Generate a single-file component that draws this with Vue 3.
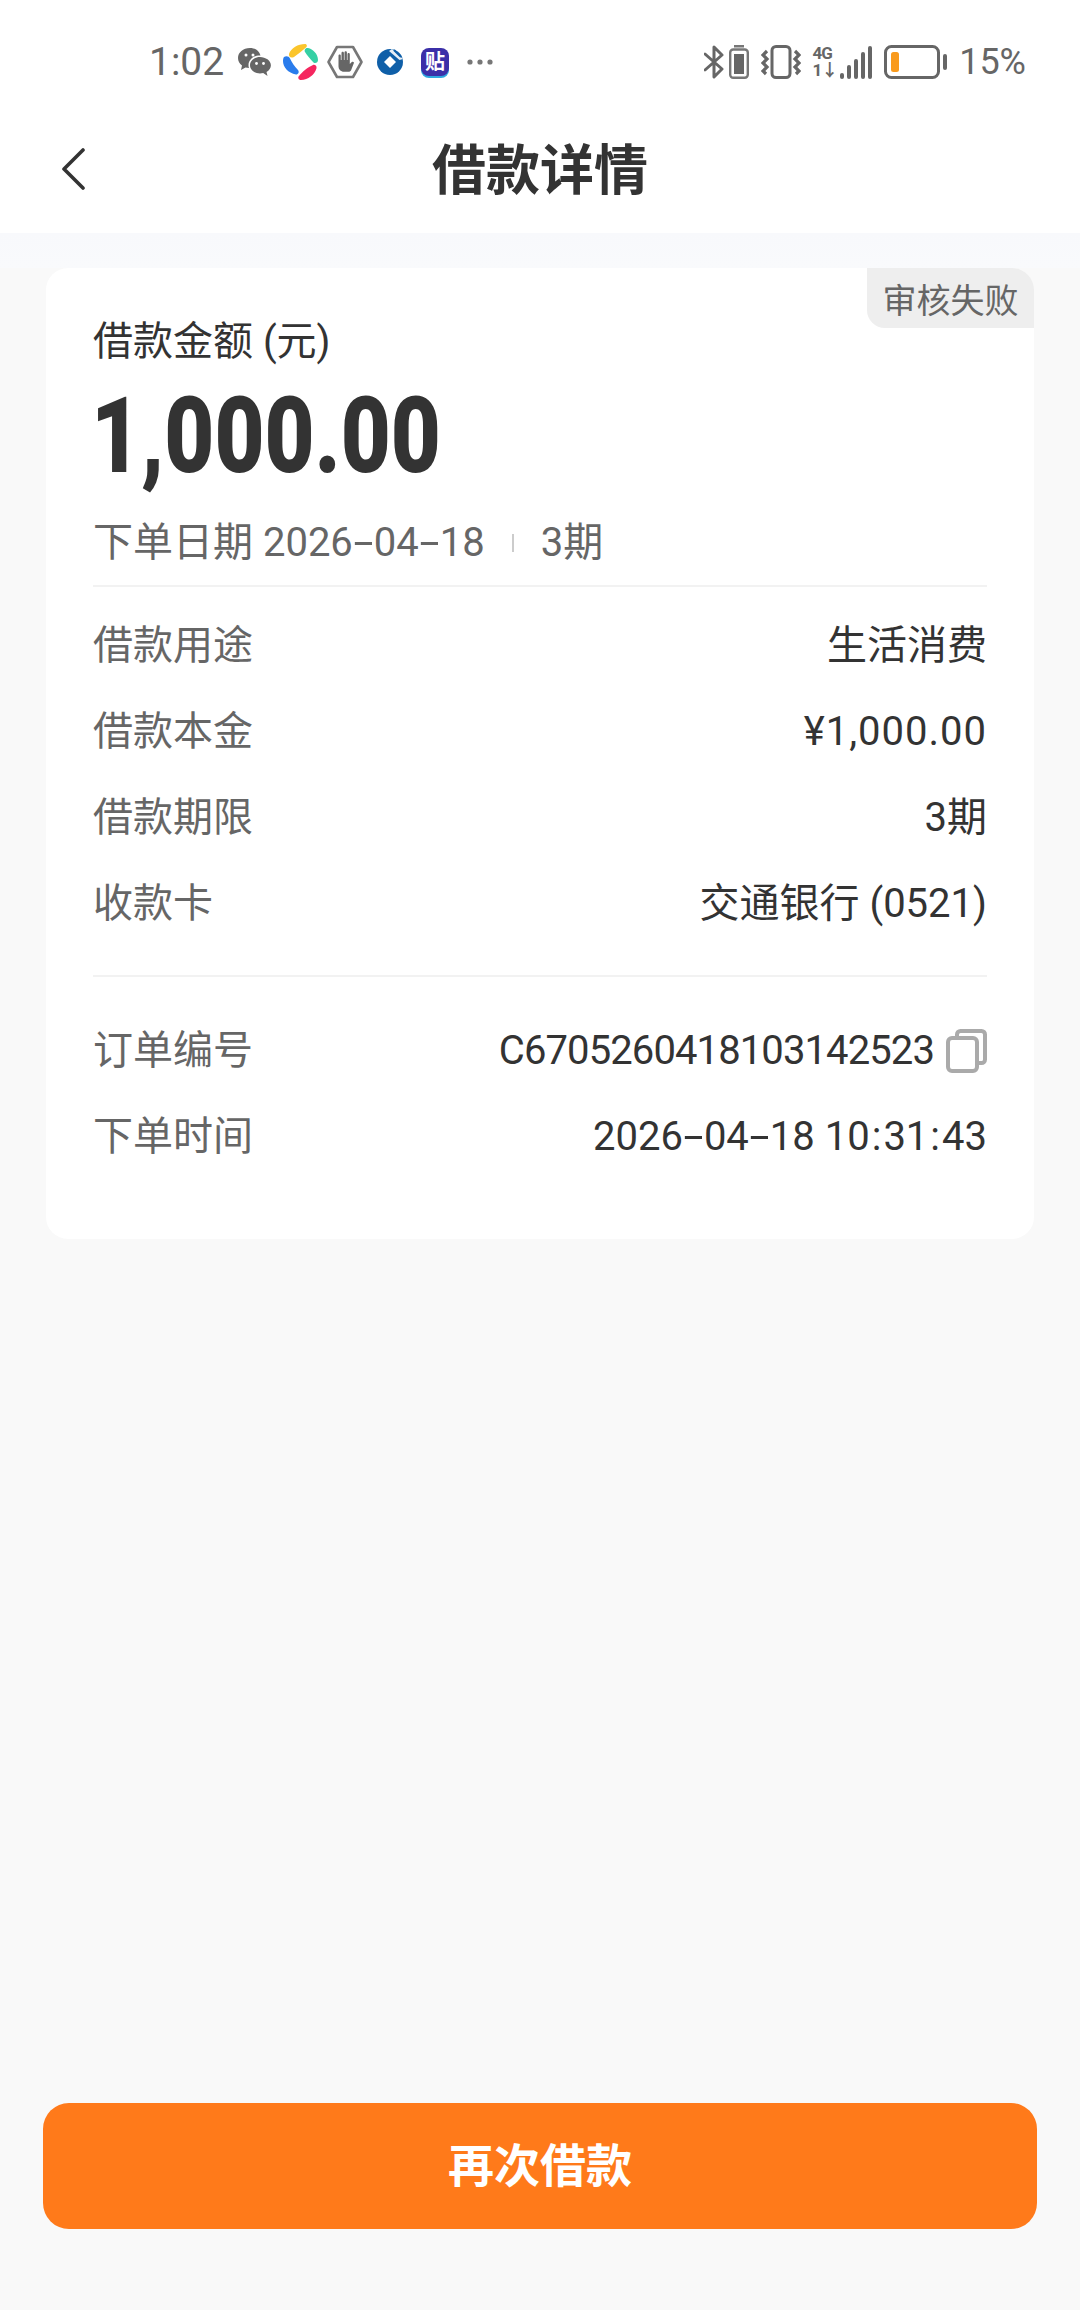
<script setup>
const details = [
  { label: '借款用途', value: '生活消费' },
  { label: '借款本金', value: '¥1,000.00', cls: 'money' },
  { label: '借款期限', value: '3期' },
  { label: '收款卡', value: '交通银行 (0521)' },
]
</script>

<template>
  <div class="page">
    <div class="status-bar">
      <div class="status-left">
        <span class="time">1:02</span>
        <!-- wechat -->
        <svg class="ic-wechat" width="34" height="30" viewBox="0 0 34 30">
          <path d="M13 1C6 1 1 5.500 1 11c0 3 1.500 5.600 4 7.500L4 23l4.500-2.500c1.200.3 2.500.5 3.500.5-.3-1-.5-1.800-.5-2.800 0-5.500 5-9.700 11-9.700h1C22 3.500 18 1 13 1z" fill="#666"/>
          <path d="M23 10c-5.500 0-10 3.600-10 8.200s4.500 8.200 10 8.200c1.100 0 2.200-.2 3.200-.5L30.500 29l-1-4c2.700-1.600 4.400-4 4.400-6.800C33.900 13.600 28.500 10 23 10z" fill="#666"/>
          <circle cx="9" cy="8" r="1.500" fill="#fff"/><circle cx="16" cy="8" r="1.500" fill="#fff"/>
          <circle cx="19.500" cy="16.500" r="1.400" fill="#fff"/><circle cx="26.500" cy="16.500" r="1.400" fill="#fff"/>
        </svg>
        <!-- colourful petals -->
        <svg class="ic-petal" width="35" height="36" viewBox="0 0 35 36">
          <path d="M6 10C8 4 15 0 22 0c2 0 2.500 2.500 1 3.500C19 7 15 10 11 13c-3 1.500-5.500 0-5-3z" fill="#fbc52c"/>
          <path d="M25 4c5 1 10 6 10 12 0 2.500-2.500 4-4.500 2.500C27 15 24 11 22 8c-1.200-2.500 1-4.500 3-4z" fill="#35d0a4"/>
          <path d="M1 13c2-1.500 5-1 6 1.500 2 4 4.500 8 8 11.500 1.500 2 .5 4.500-2 4.500C5 29 0 23 0 17c0-1.500.3-3 1-4z" fill="#2a7cec"/>
          <path d="M30 21c2-.6 4 1 3.500 3.300C31.500 31 25 36 18 36c-2.500 0-3.500-2.500-2-4C19 28 25 23 30 21z" fill="#f5265f"/>
        </svg>
        <!-- stop hand -->
        <svg class="ic-hand" width="36" height="36" viewBox="0 0 36 36">
          <path d="M10 3h16l8.500 15L26 33H10L1.500 18z" fill="none" stroke="#777" stroke-width="2.600" stroke-linejoin="round"/>
          <path d="M11.500 18v-6.500c0-1.500 2.300-1.500 2.300 0V16h.7V9c0-1.600 2.400-1.600 2.400 0v7h.6V8.500c0-1.600 2.400-1.600 2.400 0V16h.6v-6c0-1.500 2.300-1.500 2.300 0v10l2-2c1.200-1 2.800.3 1.900 1.600L24 26.500c-.7.900-1.500 1.200-2.500 1.200H17c-3.300 0-5.500-2.500-5.500-5.500z" fill="#666"/>
        </svg>
        <!-- ccb -->
        <svg class="ic-ccb" width="26" height="26" viewBox="0 0 26 26">
          <circle cx="13" cy="13" r="13" fill="#0f5fa8"/>
          <path d="M13 7l6 6-6 6-6-6z" fill="#fff"/>
          <path d="M15 0l11 10-3.500 1L12 2z" fill="#fff" opacity=".9"/>
          <path d="M17 1l7 7" stroke="#0f5fa8" stroke-width="2"/>
        </svg>
        <!-- tie -->
        <div class="ic-tie"><span>贴</span></div>
        <svg class="ic-dots" width="26" height="6" viewBox="0 0 26 6">
          <circle cx="3" cy="3" r="2.600" fill="#777"/><circle cx="13" cy="3" r="2.600" fill="#777"/><circle cx="23" cy="3" r="2.600" fill="#777"/>
        </svg>
      </div>
      <div class="status-right">
        <!-- bluetooth -->
        <svg class="ic-bt" width="21" height="34" viewBox="0 0 21 34">
          <path d="M1 9l17 15-8 8V2l8 8L1 25" fill="none" stroke="#666" stroke-width="3" stroke-linejoin="round" stroke-linecap="round"/>
        </svg>
        <svg class="ic-batt-s" width="20" height="34" viewBox="0 0 20 34">
          <rect x="5" y="0" width="10" height="2.500" fill="#777"/>
          <rect x="1.200" y="4.500" width="17.600" height="28.300" rx="3" fill="none" stroke="#777" stroke-width="2.400"/>
          <rect x="5" y="9" width="10" height="20" fill="#666"/>
        </svg>
        <!-- vibrate -->
        <svg class="ic-vib" width="40" height="34" viewBox="0 0 40 34">
          <rect x="11" y="1.500" width="18" height="31" rx="4" fill="none" stroke="#666" stroke-width="3"/>
          <path d="M6 6L2 10l4 4-4 4 4 4-4 4 3 3M34 6l4 4-4 4 4 4-4 4 4 4-3 3" fill="none" stroke="#666" stroke-width="3.200"/>
        </svg>
        <div class="signal">
          <div class="net"><span>4G</span><span class="net-arrows">1↓</span></div>
          <div class="bars">
            <i style="height: 6px"></i><i style="height: 14px"></i><i style="height: 20px"></i><i style="height: 27px"></i><i style="height: 33px"></i>
          </div>
        </div>
        <!-- battery -->
        <svg class="ic-batt" width="64" height="34" viewBox="0 0 64 34">
          <rect x="1.500" y="1.500" width="53" height="31" rx="6" fill="none" stroke="#666" stroke-width="3"/>
          <rect x="7" y="7" width="8" height="20" rx="2.500" fill="#f99a1c"/>
          <rect x="59" y="9" width="4" height="16" rx="2" fill="#666"/>
        </svg>
        <span class="percent">15%</span>
      </div>
    </div>

    <div class="nav">
      <svg class="back" width="26" height="42" viewBox="0 0 26 42">
        <path d="M23 2L4 21l19 19" fill="none" stroke="#333" stroke-width="3.600" stroke-linecap="round" stroke-linejoin="round"/>
      </svg>
      <span class="title">借款详情</span>
    </div>

    <div class="band"></div>

    <div class="card">
      <div class="badge">审核失败</div>
      <div class="amount-label">借款金额 (元)</div>
      <div class="amount">1,000.00</div>
      <div class="meta">
        <span>下单日期 2026<span class="dash">-</span>04<span class="dash">-</span>18</span>
        <i class="meta-sep"></i>
        <span>3期</span>
      </div>
      <div class="rows first">
        <div v-for="row in details" :key="row.label" class="row">
          <span class="label">{{ row.label }}</span>
          <span class="value" :class="row.cls">{{ row.value }}</span>
        </div>
      </div>
      <div class="rows second">
        <div class="row">
          <span class="label">订单编号</span>
          <span class="value order">
            <span class="order-no">C6705260418103142523</span>
            <svg width="41" height="44" viewBox="0 0 41 44">
              <path d="M11 8V5.500c0-2 1.500-3.500 3.500-3.500h21c2 0 3.500 1.500 3.500 3.500v25c0 2-1.500 3.500-3.500 3.500H32" fill="none" stroke="#aaa" stroke-width="4"/>
              <rect x="2" y="9" width="29" height="33" rx="4" fill="none" stroke="#aaa" stroke-width="4"/>
            </svg>
          </span>
        </div>
        <div class="row">
          <span class="label">下单时间</span>
          <span class="value">2026<span class="dash">-</span>04<span class="dash">-</span>18 10<span class="colon">:</span>31<span class="colon">:</span>43</span>
        </div>
      </div>
    </div>

    <button class="again">再次借款</button>
  </div>
</template>

<style>
html, body { margin: 0; background: #f9f9f9; }
</style>

<style scoped>
.page {
  width: 1080px;
  height: 2310px;
  display: flex;
  flex-direction: column;
  background: #f9f9f9;
  font-family: Roboto, "Noto Sans CJK SC", sans-serif;
  color: #333;
  overflow: hidden;
}

.status-bar {
  height: 100px;
  background: #fff;
  display: flex;
  justify-content: space-between;
  align-items: center;
  padding: 24px 54px 0 149px;
  box-sizing: border-box;
}
.status-left, .status-right { display: flex; align-items: center; color: #666; }
.time { font-size: 39px; width: 88px; }
.ic-petal { margin-left: 12px; }
.ic-hand { margin-left: 9px; }
.ic-ccb { margin-left: 14px; }
.ic-tie {
  margin-left: 18px;
  width: 28px;
  height: 28px;
  border-radius: 8px;
  background: #3b2fa8;
  display: flex;
  align-items: center;
  justify-content: center;
  box-shadow: 0 2px 0 #2fa8e0;
}
.ic-tie span { color: #fff; font-size: 20px; line-height: 1; font-weight: 700; }
.ic-dots { margin-left: 18px; }
.ic-batt-s { margin-left: 4px; }
.ic-vib { margin-left: 12px; }
.signal { display: flex; align-items: flex-end; margin-left: 11px; gap: 3px; }
.net {
  display: flex;
  flex-direction: column;
  font-size: 17px;
  line-height: 17px;
  font-weight: 700;
  letter-spacing: -1px;
}
.bars { display: flex; align-items: flex-end; gap: 3px; }
.bars i { width: 4px; background: #666; border-radius: 2px; display: block; }
.ic-batt { margin-left: 12px; }
.percent { font-size: 36px; margin-left: 11px; }

.nav {
  height: 133px;
  background: #fff;
  position: relative;
  display: flex;
  align-items: center;
  justify-content: center;
}
.back { position: absolute; left: 60px; top: 48px; }
.title { font-size: 54px; font-weight: 700; color: #333; }

.band {
  height: 35px;
  background: linear-gradient(#f8f9fc, #f9fafc);
}

.card {
  position: relative;
  margin: 0 46px;
  height: 971px;
  box-sizing: border-box;
  padding: 48px 47px 0;
  background: #fff;
  border-radius: 22px;
}
.badge {
  position: absolute;
  top: 0;
  right: 0;
  width: 167px;
  height: 60px;
  display: flex;
  align-items: center;
  justify-content: center;
  background: #eeeeee;
  color: #666;
  font-size: 34px;
  border-radius: 0 22px 0 18px;
}
.amount-label { font-size: 40px; line-height: 52px; color: #333; }
.amount {
  font-size: 106px;
  font-weight: 900;
  line-height: 120px;
  margin: 8px 0 0 -2px;
  color: #333;
  transform: scaleX(0.815);
  transform-origin: left center;
}
.meta {
  display: flex;
  align-items: center;
  margin-top: 21px;
  font-size: 40px;
  line-height: 52px;
  color: #666;
}
.meta-sep {
  width: 2px;
  height: 18px;
  background: #ccc;
  margin: 0 27px;
}
.dash {
  display: inline-block;
  width: 21px;
  text-align: center;
  transform: scaleX(1.8);
}
.colon { margin: 0 2px; }
.rows { display: flex; flex-direction: column; border-top: 2px solid #f2f2f2; }
.rows.first { margin-top: 16px; padding-top: 26px; gap: 30px; }
.rows.second { margin-top: 48px; padding-top: 41px; gap: 30px; }
.row {
  display: flex;
  justify-content: space-between;
  align-items: baseline;
  height: 56px;
  font-size: 40px;
}
.label { color: #666; }
.value { color: #333; }
.money { letter-spacing: 1px; }
.order { display: flex; align-items: center; gap: 12px; }
.order-no { letter-spacing: -0.9px; }

.again {
  margin: auto 43px 81px;
  height: 126px;
  padding: 0 0 8px;
  border: 0;
  border-radius: 26px;
  background: #ff7a1a;
  color: #fff;
  font-family: inherit;
  font-size: 46px;
  font-weight: 700;
}
</style>
